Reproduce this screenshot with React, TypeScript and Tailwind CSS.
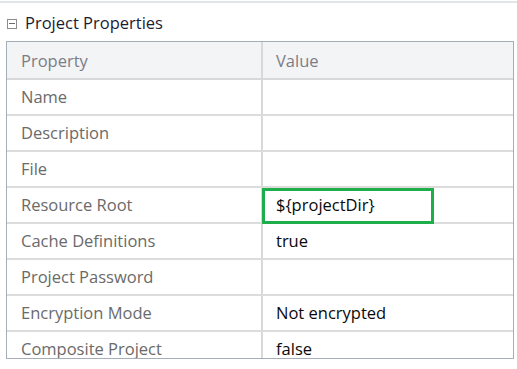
import React from "react";

const rows: [string, string][] = [
  ["Name", ""],
  ["Description", ""],
  ["File", ""],
  ["Resource Root", "${projectDir}"],
  ["Cache Definitions", "true"],
  ["Project Password", ""],
  ["Encryption Mode", "Not encrypted"],
  ["Composite Project", "false"],
];

export default function App() {
  return (
    <div
      className="w-[517px] h-[369px] bg-white overflow-hidden"
      style={{ fontFamily: '"Open Sans", "Noto Sans", sans-serif' }}
    >
      <div className="h-[2px] mt-[1px] bg-[#e1e5ea]" />
      <div className="h-[38px] flex items-center pl-[7px] pt-[3px]">
        <div className="w-[10px] h-[10px] border border-[#8c8c8c] flex items-center justify-center mr-[8px]">
          <div className="w-[6px] h-[1px] bg-[#6c6c6c]" />
        </div>
        <span className="text-[16.5px] text-[#1d1b33]">Project Properties</span>
      </div>
      <div className="ml-[6px] w-[508px] h-[318px] border border-[#a4adb9] overflow-hidden">
        <div className="flex h-[38px] bg-[#f3f4f6] border-b-2 border-[#d8d8d8]">
          <div className="w-[256px] border-r-2 border-[#d8d8d8] flex items-center pl-[14px] pt-[2px] text-[16.5px] text-[#7c7c86]">
            Property
          </div>
          <div className="flex-1 flex items-center pl-[13px] pt-[2px] text-[16.5px] text-[#7c7c86]">Value</div>
        </div>
        {rows.map(([k, v], i) => (
          <div key={i} className="flex h-[36px] border-b-2 border-[#dcdcdc]">
            <div className="w-[256px] border-r-2 border-[#d8d8d8] flex items-center pl-[14px] pt-[1px] text-[16.5px] text-[#6a6a6a]">
              {k}
            </div>
            <div className="relative flex-1 flex items-center pl-[13px] pt-[1px] text-[16.5px] text-[#0a0a0a]">
              {v}
              {k === "Resource Root" && (
                <div className="absolute left-[-1px] top-[0px] w-[172px] h-[36px] border-[3.5px] border-[#1fae4c]" />
              )}
            </div>
          </div>
        ))}
      </div>
    </div>
  );
}
